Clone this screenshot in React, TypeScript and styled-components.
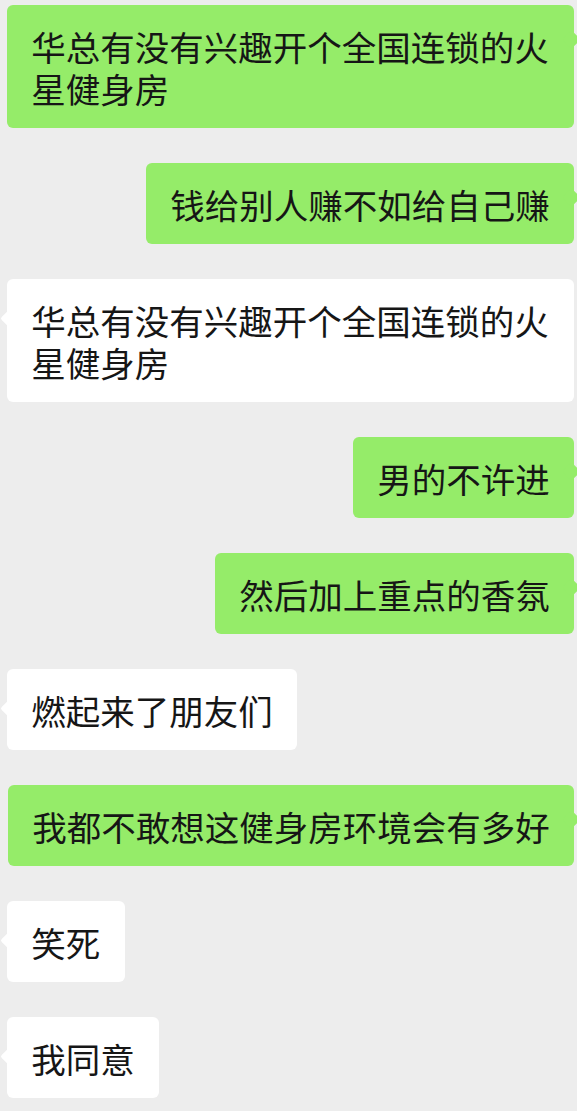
import React from "react";
import styled, { createGlobalStyle, css } from "styled-components";

const GlobalStyle = createGlobalStyle`
  html, body {
    margin: 0;
    padding: 0;
    background: #ededed;
    overflow-x: hidden;
  }
  * { box-sizing: border-box; }
`;

type Side = "me" | "other";

const Chat = styled.div`
  display: flex;
  flex-direction: column;
  gap: 35px;
  padding: 5px 3px 13px 7px;
  background: #ededed;
  min-height: 1111px;
  font-family: "Noto Sans CJK SC", "Noto Sans", sans-serif;
`;

const Bubble = styled.div<{ $side: Side }>`
  position: relative;
  max-width: 100%;
  padding: 19.5px 24.3px;
  border-radius: 6px;
  font-size: 34.5px;
  line-height: 42px;
  color: #161616;
  word-break: break-all;
  ${(p) =>
    p.$side === "me"
      ? css`
          align-self: flex-end;
          background: #95ec69;
        `
      : css`
          align-self: flex-start;
          background: #ffffff;
        `}

  &::before {
    content: "";
    position: absolute;
    width: 13px;
    height: 13px;
    border-radius: 2px;
    transform: rotate(45deg);
    background: inherit;
    ${(p) =>
      p.$side === "me"
        ? css`
            top: 28px;
            right: -4.3px;
          `
        : css`
            top: 33px;
            left: -4.3px;
          `}
  }
`;

const messages: { side: Side; text: string }[] = [
  { side: "me", text: "华总有没有兴趣开个全国连锁的火星健身房" },
  { side: "me", text: "钱给别人赚不如给自己赚" },
  { side: "other", text: "华总有没有兴趣开个全国连锁的火星健身房" },
  { side: "me", text: "男的不许进" },
  { side: "me", text: "然后加上重点的香氛" },
  { side: "other", text: "燃起来了朋友们" },
  { side: "me", text: "我都不敢想这健身房环境会有多好" },
  { side: "other", text: "笑死" },
  { side: "other", text: "我同意" },
];

export default function App() {
  return (
    <>
      <GlobalStyle />
      <Chat>
        {messages.map((m, i) => (
          <Bubble key={i} $side={m.side}>
            {m.text}
          </Bubble>
        ))}
      </Chat>
    </>
  );
}
